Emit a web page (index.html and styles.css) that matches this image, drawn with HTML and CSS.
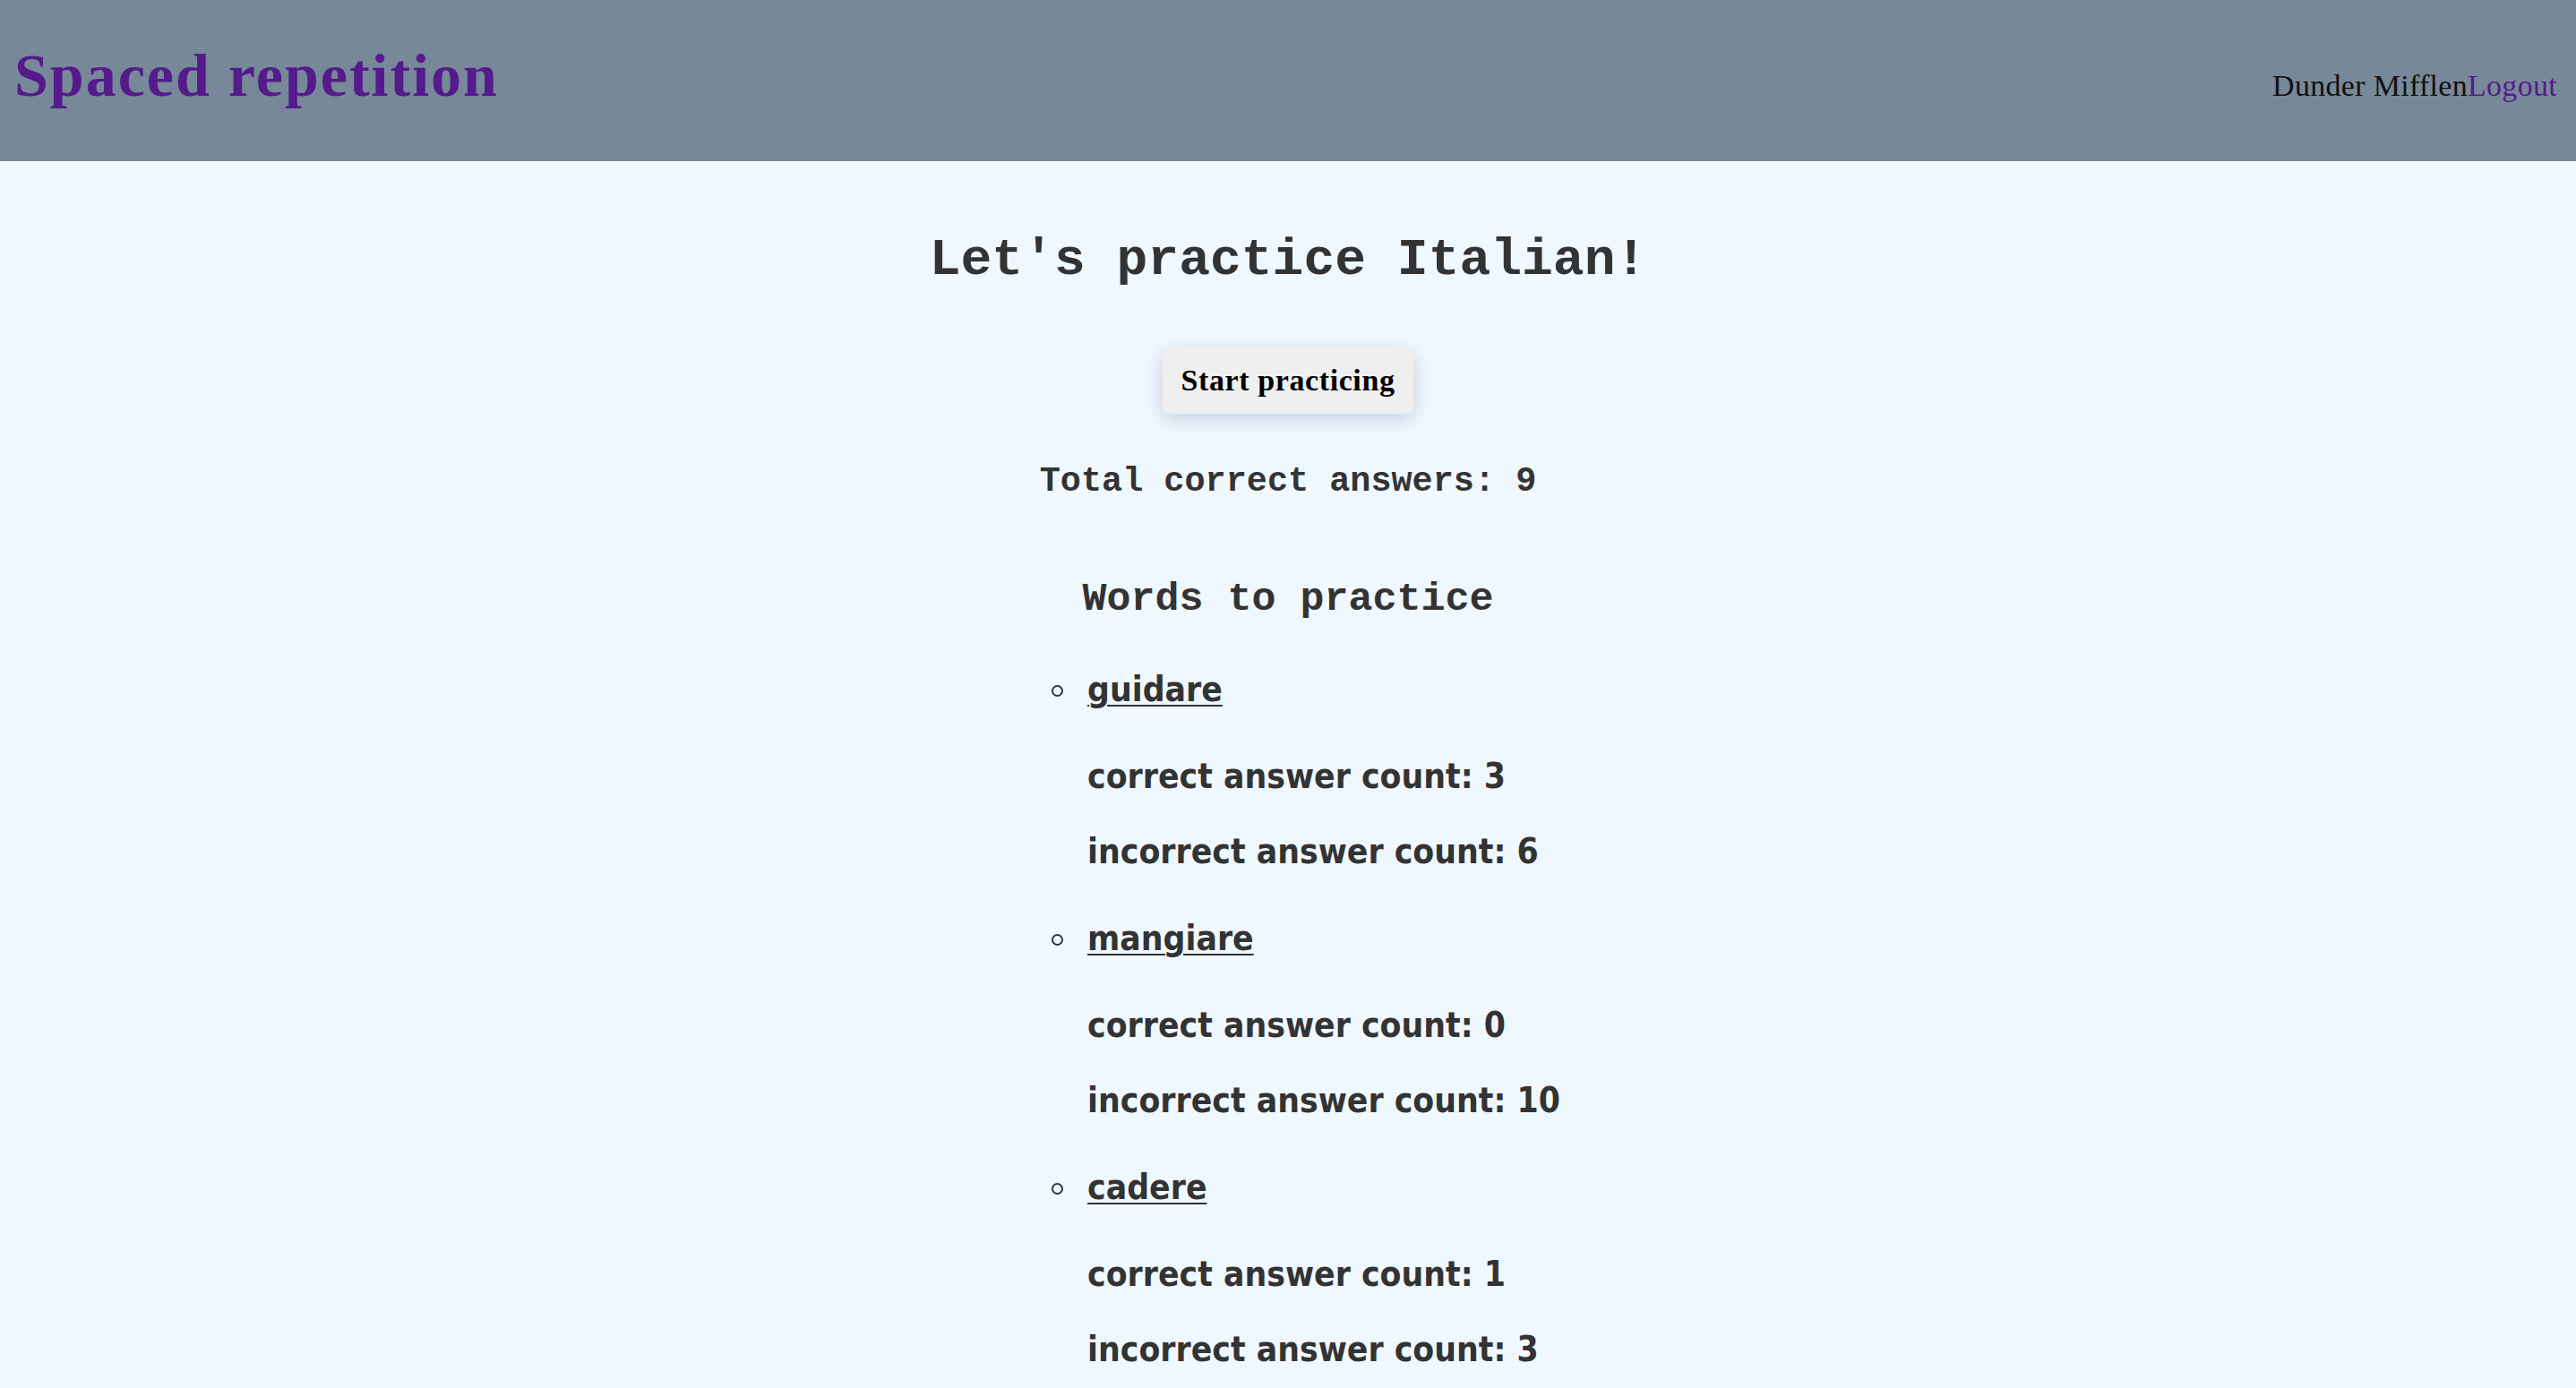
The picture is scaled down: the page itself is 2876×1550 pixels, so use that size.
FILE: index.html
```html
<!DOCTYPE html>
<html lang="en">
<head>
<meta charset="utf-8">
<title>Spaced repetition</title>
<link rel="stylesheet" href="styles.css">
</head>
<body>
<header class="topbar">
  <h1 class="brand"><a class="brand-link" href="#">Spaced repetition</a></h1>
  <nav class="user-nav"><span class="user-name">Dunder Mifflen</span><a class="logout" href="#">Logout</a></nav>
</header>
<main class="dashboard">
  <h2 class="lang-title">Let's practice Italian!</h2>
  <button class="start-btn" type="button">Start practicing</button>
  <h3 class="total">Total correct answers: 9</h3>
  <section class="words">
    <h3 class="words-title">Words to practice</h3>
    <ul class="word-list">
      <li class="word-item">
        <a class="word" href="#">guidare</a>
        <p class="count">correct answer count: 3</p>
        <p class="count count-incorrect">incorrect answer count: 6</p>
      </li>
      <li class="word-item">
        <a class="word" href="#">mangiare</a>
        <p class="count">correct answer count: 0</p>
        <p class="count count-incorrect">incorrect answer count: 10</p>
      </li>
      <li class="word-item">
        <a class="word" href="#">cadere</a>
        <p class="count">correct answer count: 1</p>
        <p class="count count-incorrect">incorrect answer count: 3</p>
      </li>
    </ul>
  </section>
</main>
</body>
</html>
```

FILE: styles.css
```css
html, body {
  margin: 0;
  padding: 0;
}

body {
  background: #f0f8ff;
  color: #333;
  font-family: "Liberation Serif", serif;
}

.topbar {
  display: flex;
  justify-content: space-between;
  align-items: baseline;
  box-sizing: border-box;
  height: 180px;
  padding: 44px 21px 0 16px;
  background: #778899;
}

.brand {
  margin: 0;
  font-family: "Liberation Serif", serif;
  font-size: 68px;
  line-height: 80px;
  font-weight: 700;
  letter-spacing: 2px;
}

.brand-link {
  color: #551a8b;
  text-decoration: none;
}

.user-nav {
  font-family: "Liberation Serif", serif;
  font-size: 34px;
  letter-spacing: 0.3px;
  color: #111;
}

.logout {
  color: #551a8b;
  text-decoration: none;
}

.dashboard {
  display: flex;
  flex-direction: column;
  align-items: center;
  padding-top: 77px;
}

.lang-title {
  margin: 0;
  font-family: "Liberation Mono", monospace;
  font-size: 58px;
  line-height: 68px;
  font-weight: 700;
  color: #333;
}

.start-btn {
  margin-top: 63px;
  padding: 17px 20px;
  border: 0;
  border-radius: 8px;
  background: #efefef;
  color: #000;
  font-family: "Liberation Serif", serif;
  font-size: 34px;
  line-height: 40px;
  font-weight: 700;
  letter-spacing: 0.6px;
  box-shadow: 0 6px 22px rgba(60, 80, 110, 0.24);
}

.total {
  margin: 54px 0 0;
  font-family: "Liberation Mono", monospace;
  font-size: 38.5px;
  line-height: 44px;
  font-weight: 700;
}

.words {
  display: flex;
  flex-direction: column;
  align-items: center;
  margin-top: 84px;
}

.words-title {
  margin: 0;
  font-family: "Liberation Mono", monospace;
  font-size: 45px;
  line-height: 52px;
  font-weight: 700;
}

.word-list {
  margin: 52px 0 0;
  padding-left: 80px;
  list-style: none;
  font-family: "DejaVu Sans Condensed", "DejaVu Sans", sans-serif;
  font-stretch: condensed;
  font-size: 38.7px;
  line-height: 44px;
  font-weight: 700;
  color: #333;
}

.word-item {
  position: relative;
}

.word-item::before {
  content: "";
  position: absolute;
  left: -40px;
  top: 17px;
  width: 13px;
  height: 13px;
  box-sizing: border-box;
  border: 2px solid #333;
  border-radius: 50%;
}

.word-item + .word-item {
  margin-top: 53px;
}

.word {
  display: block;
  color: #333;
  text-decoration: underline;
  text-decoration-thickness: 2px;
  text-underline-offset: 4px;
  margin-bottom: 53px;
}

.count {
  margin: 0;
}

.count-incorrect {
  margin-top: 40px;
}
```
